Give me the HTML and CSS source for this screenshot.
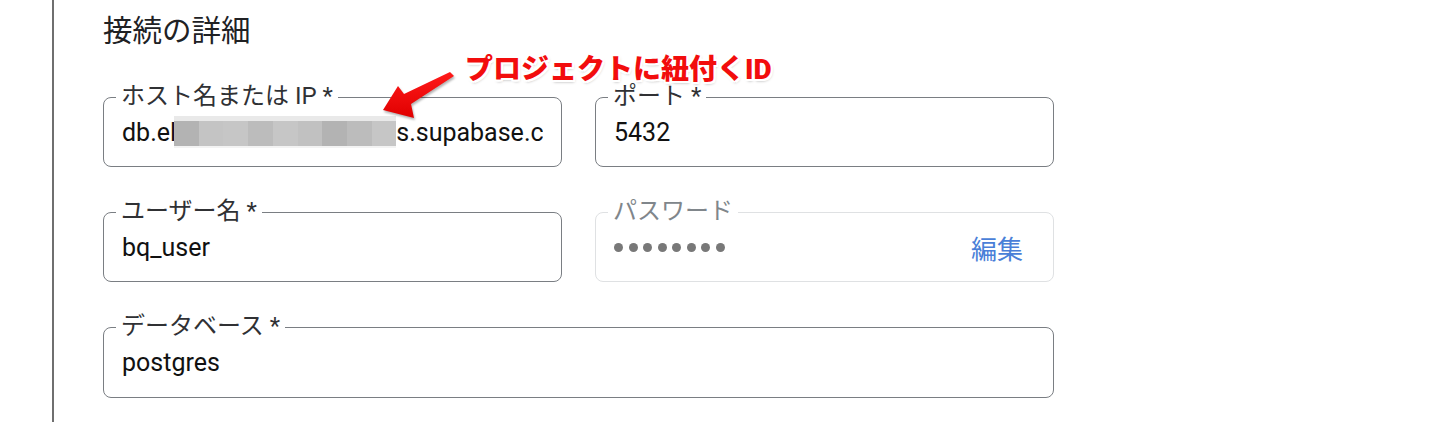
FILE: index.html
```html
<!DOCTYPE html>
<html lang="ja">
<head>
<meta charset="utf-8">
<link rel="stylesheet" href="styles.css">
</head>
<body>
<div class="page">
  <div class="rail"></div>
  <main class="content">
    <h2 class="title">接続の詳細</h2>
    <div class="grid">
      <div class="field">
        <span class="label">ホスト名または IP *</span>
        <div class="value"><span class="clip">db.el<span class="mosaic"><i class="m1"></i><i class="m2"></i><i class="m3"></i><i class="m4"></i><i class="m3"></i><i class="m5"></i><i class="m1"></i><i class="m4"></i><i class="m3"></i></span>s.supabase.co</span></div>
      </div>
      <div class="field">
        <span class="label">ポート *</span>
        <div class="value">5432</div>
      </div>
      <div class="field">
        <span class="label">ユーザー名 *</span>
        <div class="value">bq_user</div>
      </div>
      <div class="field disabled">
        <span class="label">パスワード</span>
        <div class="value pw">
          <span class="dots"><i></i><i></i><i></i><i></i><i></i><i></i><i></i><i></i></span>
          <span class="edit">編集</span>
        </div>
      </div>
      <div class="field wide">
        <span class="label">データベース *</span>
        <div class="value">postgres</div>
      </div>
    </div>
    <div class="note">プロジェクトに紐付くID</div>
    <svg class="arrow" width="90" height="60" viewBox="0 0 90 60">
      <defs>
        <linearGradient id="ag" x1="0" y1="0" x2="0" y2="1">
          <stop offset="0" stop-color="#ff1a1a"/>
          <stop offset="1" stop-color="#e00000"/>
        </linearGradient>
      </defs>
      <polygon points="8,45 23,21 29,29 75,7 79,11 36,39 39,53" fill="url(#ag)"/>
    </svg>
  </main>
</div>
</body>
</html>
```

FILE: styles.css
```css
* { box-sizing: border-box; }
html, body { margin: 0; padding: 0; background: #fff; }
body {
  font-family: Roboto, "Noto Sans CJK JP", sans-serif;
  color: #202124;
}
.page {
  display: flex;
  height: 422px;
  overflow: hidden;
}
.rail {
  width: 54px;
  flex: none;
  border-right: 2px solid #6f6f6f;
}
.content {
  position: relative;
  flex: 1;
  padding: 11px 0 0 49px;
}
.title {
  margin: 0;
  font-weight: 400;
  font-size: 29.5px;
  line-height: 41px;
  color: #202124;
}
.grid {
  margin-top: 45px;
  display: grid;
  grid-template-columns: 459px 459px;
  column-gap: 33px;
  row-gap: 45px;
}
.field {
  position: relative;
  height: 70px;
  border: 1.5px solid #7a7e83;
  border-radius: 8px;
}
.field.wide { grid-column: 1 / 3; height: 71px; }
.field.disabled { border-color: #dfe1e3; }
.label {
  position: absolute;
  top: -16px;
  left: 12px;
  padding: 0 5px;
  background: #fff;
  font-size: 24px;
  line-height: 29px;
  color: #303134;
  white-space: nowrap;
}
.disabled .label { color: #80868b; }
.value {
  height: 100%;
  display: flex;
  align-items: center;
  padding: 0 18px;
  font-size: 25px;
  color: #111;
  white-space: nowrap;
}
.clip {
  display: flex;
  align-items: center;
  flex: 1;
  min-width: 0;
  overflow: hidden;
}
.mosaic {
  display: inline-flex;
  height: 32px;
  flex: none;
  margin-left: -2px;
  border-top: 5px solid #e9e9e9;
  border-bottom: 2px solid #f3f3f3;
}
.mosaic i {
  display: block;
  width: 24.7px;
  height: 100%;
}
.m1 { background: #b3b3b3; }
.m2 { background: #c4c4c4; }
.m3 { background: #c6c6c6; }
.m4 { background: #bcbcbc; }
.m5 { background: #c1c1c1; }
.pw { justify-content: space-between; padding-right: 30px; }
.dots { display: flex; gap: 5.5px; }
.dots i {
  display: block;
  width: 9px;
  height: 9px;
  border-radius: 50%;
  background: #787878;
}
.edit { color: #4a7fd8; font-size: 26px; }
.note {
  position: absolute;
  left: 411px;
  top: 52px;
  font-size: 28px;
  font-weight: 900;
  line-height: 36px;
  color: #f20d0d;
  white-space: nowrap;
  text-shadow:
    -2px 0 0 #fff, 2px 0 0 #fff, 0 -2px 0 #fff, 0 2px 0 #fff,
    -2px -2px 0 #fff, 2px -2px 0 #fff, -2px 2px 0 #fff, 2px 2px 0 #fff,
    1px 2px 3px rgba(0,0,0,0.35);
}
.arrow {
  position: absolute;
  left: 321px;
  top: 65px;
  filter: drop-shadow(1px 2px 1px rgba(0,0,0,0.3));
}
```
